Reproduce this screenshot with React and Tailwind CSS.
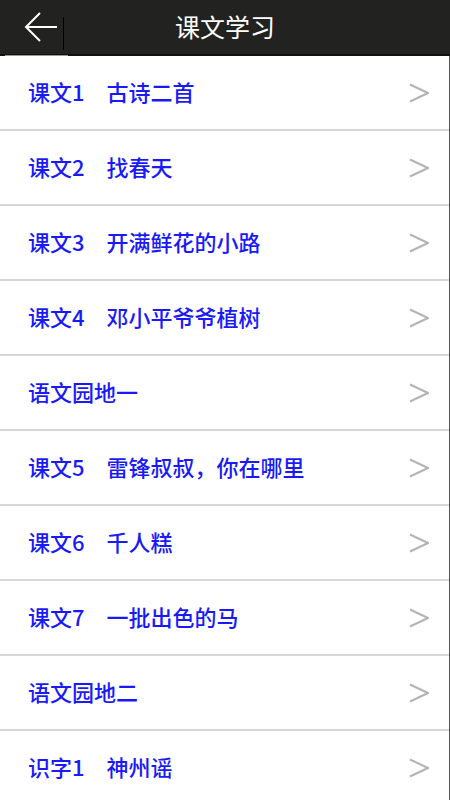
import React from 'react';

const lessons = [
  '课文1　古诗二首',
  '课文2　找春天',
  '课文3　开满鲜花的小路',
  '课文4　邓小平爷爷植树',
  '语文园地一',
  '课文5　雷锋叔叔，你在哪里',
  '课文6　千人糕',
  '课文7　一批出色的马',
  '语文园地二',
  '识字1　神州谣',
];

function Chevron() {
  return (
    <svg width="20" height="20" viewBox="0 0 20 20" className="shrink-0">
      <polyline points="1,1.5 19,10 1,18.5" fill="none" stroke="#b4b4b4" strokeWidth="2" />
    </svg>
  );
}

export default function App() {
  return (
    <div
      className="w-[450px] h-[800px] overflow-hidden bg-white flex flex-col"
      style={{ fontFamily: '"Noto Sans CJK SC", "Noto Sans", sans-serif' }}
    >
      <header className="h-[56px] shrink-0 bg-[#222321] border-b-2 border-[#111] flex items-center relative">
        <button className="w-[68px] h-full flex items-center pl-[24px] relative">
          <svg width="34" height="32" viewBox="0 0 34 32">
            <path d="M16 2 L2 16 L16 30 M2 16 L33 16" fill="none" stroke="#fff" strokeWidth="2" />
          </svg>
          <span className="absolute right-[4px] top-[17px] w-[1.5px] h-[33px] bg-black" />
          <span className="absolute left-[5px] right-0 -bottom-[2px] h-px bg-[#9a9a9a]" />
        </button>
        <h1 className="flex-1 text-center text-white text-[25px] pr-[68px] -mt-[1px]">课文学习</h1>
      </header>
      <ul className="flex-1 border-r border-[#555]">
        {lessons.map((t) => (
          <li
            key={t}
            className="h-[75px] border-b-2 border-[#d6d6d6] flex items-center justify-between pl-[28px] pr-[20px]"
          >
            <span className="text-[22px] font-medium text-[#1a1af8] pb-[2px]">{t}</span>
            <Chevron />
          </li>
        ))}
      </ul>
    </div>
  );
}
